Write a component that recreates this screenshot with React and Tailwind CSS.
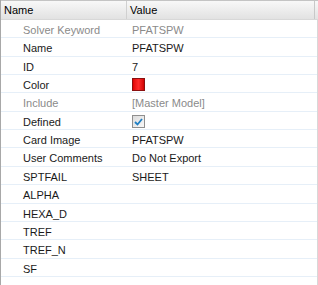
import React from "react";

const rows = [
  { label: "Solver Keyword", value: "PFATSPW", muted: true, h: "h-[18px]" },
  { label: "Name", value: "PFATSPW", h: "h-[19px]" },
  { label: "ID", value: "7", h: "h-[18px]" },
  { label: "Color", type: "color", h: "h-[18px]" },
  { label: "Include", value: "[Master Model]", muted: true, h: "h-[19px]" },
  { label: "Defined", type: "check", h: "h-[18px]" },
  { label: "Card Image", value: "PFATSPW", h: "h-[18px]" },
  { label: "User Comments", value: "Do Not Export", h: "h-[19px]" },
  { label: "SPTFAIL", value: "SHEET", h: "h-[18px]" },
  { label: "ALPHA", value: "", h: "h-[19px]" },
  { label: "HEXA_D", value: "", h: "h-[18px]" },
  { label: "TREF", value: "", h: "h-[18px]" },
  { label: "TREF_N", value: "", h: "h-[19px]" },
  { label: "SF", value: "", h: "h-[18px]" },
];

function ColorSwatch() {
  return (
    <div className="w-[13px] h-[13px] border border-[#8a1010] bg-gradient-to-r from-[#e00000] via-[#ff2a2a] to-[#d00000]" />
  );
}

function CheckBox() {
  return (
    <div className="w-[13px] h-[13px] border border-[#8f8f8f] bg-gradient-to-br from-[#dcdcdc] to-[#f8f8f8] flex items-center justify-center">
      <svg width="9" height="8" viewBox="0 0 9 8">
        <path d="M1 4 L3.5 6.5 L8 1" stroke="#1f7fc4" strokeWidth="1.8" fill="none" />
      </svg>
    </div>
  );
}

export default function App() {
  return (
    <div
      className="w-[318px] h-[285px] bg-white flex flex-col border-l border-[#a8a8a8] overflow-hidden"
      style={{ fontFamily: '"Liberation Sans", Arial, sans-serif' }}
    >
      <div className="h-[20px] flex border-t border-[#c4c4c4] border-b border-b-[#d8d8d8] bg-gradient-to-b from-[#f8f8f8] to-[#e2e2e2] text-[11px] text-black shrink-0">
        <div className="w-[126px] pl-[3px] pt-[1px] flex items-center border-r border-[#d0d0d0]">Name</div>
        <div className="w-[188px] pl-[3px] pt-[1px] flex items-center border-r border-[#c8c8c8]">Value</div>
      </div>
      <div className="flex flex-col border-r border-[#d8d8d8] flex-1">
        {rows.map((r) => (
          <div
            key={r.label}
            className={`${r.h} flex border-b border-[#e6eff8] text-[11px] shrink-0 ${r.muted ? "text-[#8a8a8a]" : "text-[#1a1a1a]"}`}
          >
            <div className="w-[127px] pl-[22px] flex items-center pt-[3px]">{r.label}</div>
            {r.type ? (
              <div className="flex-1 pl-[4px] flex items-center pt-[2px]">
                {r.type === "color" ? <ColorSwatch /> : <CheckBox />}
              </div>
            ) : (
              <div className="flex-1 pl-[4px] flex items-center pt-[3px]">{r.value}</div>
            )}
          </div>
        ))}
      </div>
    </div>
  );
}
